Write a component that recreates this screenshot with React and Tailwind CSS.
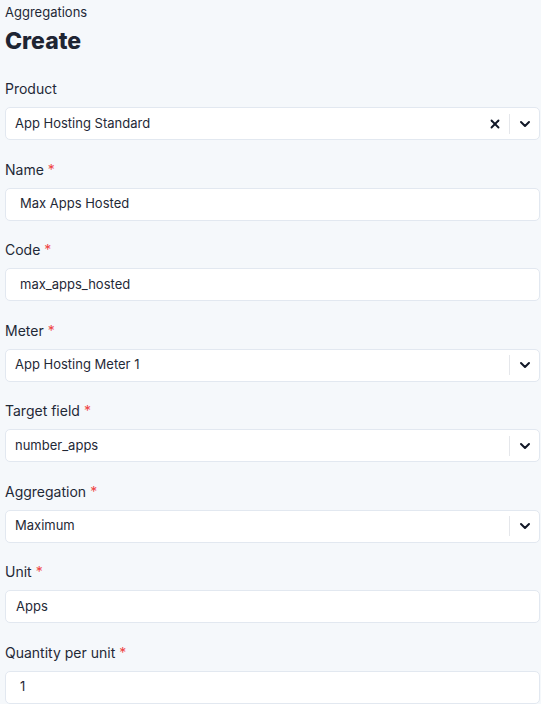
import { ChevronDown, X } from "lucide-react";

const FIELDS = [
  { label: "Name", value: "Max Apps Hosted", kind: "input", pad: "pl-[14px]" },
  { label: "Code", value: "max_apps_hosted", kind: "input", pad: "pl-[14px]" },
  { label: "Meter", value: "App Hosting Meter 1", kind: "select" },
  { label: "Target field", value: "number_apps", kind: "select" },
  { label: "Aggregation", value: "Maximum", kind: "select" },
  { label: "Unit", value: "Apps", kind: "input", pad: "pl-[10px]" },
  { label: "Quantity per unit", value: "1", kind: "input", pad: "pl-[14px]" },
];

function Label({ children, required }) {
  return (
    <label className="block h-5 text-[14px] leading-5 text-[#1f2937]">
      {children}
      {required && <span className="ml-1 text-[#ef4444]">*</span>}
    </label>
  );
}

function SelectBox({ value, clearable }) {
  return (
    <div className="flex h-[33px] items-center rounded-[5px] border border-[#e2e8f0] bg-white">
      <span className="flex-1 pl-[9px] text-[13px] text-[#1f2937]">{value}</span>
      {clearable && (
        <X size={14} strokeWidth={3.2} className="mr-[7px] text-[#111827]" />
      )}
      <div className="h-5 w-px bg-[#e5e7eb]" />
      <div className="flex w-[29px] items-center justify-center">
        <ChevronDown size={16} strokeWidth={3} className="text-[#111827]" />
      </div>
    </div>
  );
}

function InputBox({ value, pad }) {
  return (
    <div className={`flex h-[33px] items-center rounded-[5px] border border-[#e2e8f0] bg-white ${pad}`}>
      <span className="text-[13px] text-[#1f2937]">{value}</span>
    </div>
  );
}

export default function App() {
  return (
    <div
      className="min-h-screen bg-[#f5f8fb] pl-[5px] pr-[1px] pt-[3px]"
      style={{ fontFamily: "Inter, 'Noto Sans', sans-serif" }}
    >
      {/* HEADER */}
      <p className="h-[18px] text-[13px] leading-[18px] text-[#1f2937]">Aggregations</p>
      <h1 className="mt-1 h-8 text-[23px] font-extrabold leading-8 text-[#1e2533]">Create</h1>

      <div className="mt-[22px]">
        <div className="mb-[19.5px]">
          <Label>Product</Label>
          <div className="mt-2">
            <SelectBox value="App Hosting Standard" clearable />
          </div>
        </div>

        {FIELDS.map((f) => (
          <div key={f.label} className="mb-[19.5px]">
            <Label required>{f.label}</Label>
            <div className="mt-2">
              {f.kind === "select" ? (
                <SelectBox value={f.value} />
              ) : (
                <InputBox value={f.value} pad={f.pad} />
              )}
            </div>
          </div>
        ))}
      </div>
    </div>
  );
}
